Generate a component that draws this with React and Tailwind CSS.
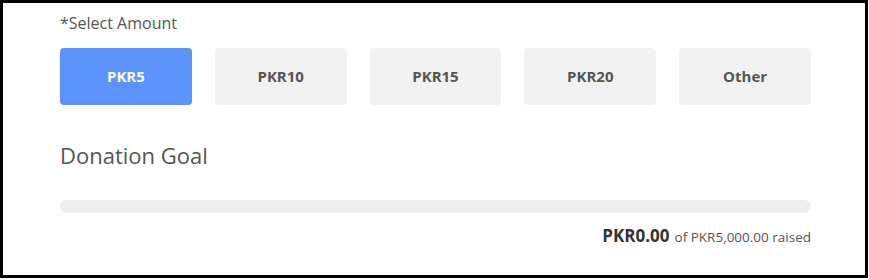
export default function App() {
  const amounts = ["PKR5", "PKR10", "PKR15", "PKR20", "Other"];
  return (
    <div className="w-[868px] h-[278px] border-[3px] border-black bg-white font-['Open_Sans',sans-serif] text-[#555]">
      <div className="w-[751px] ml-[57px] pt-[8px]">
        <p className="text-[16px] leading-[24px]">*Select Amount</p>
        <div className="grid grid-cols-5 gap-[23px] mt-[13px]">
          {amounts.map((a, i) => (
            <button
              key={a}
              className={
                i === 0
                  ? "h-[57px] rounded-[4px] bg-[#5b93fb] text-white text-[15px] font-bold"
                  : "h-[57px] rounded-[4px] bg-[#f2f2f2] text-[#555] text-[15px] font-bold"
              }
            >
              {a}
            </button>
          ))}
        </div>
        <h2 className="mt-[35px] text-[22px] leading-[30px]">Donation Goal</h2>
        <div className="mt-[30px] h-[13px] rounded-full bg-[#eeeeee]" />
        <div className="mt-[10px] flex justify-end items-baseline gap-[5px]">
          <span className="text-[17px] font-bold text-[#333]">PKR0.00</span>
          <span className="text-[13.5px] text-[#555]">of PKR5,000.00 raised</span>
        </div>
      </div>
    </div>
  );
}
